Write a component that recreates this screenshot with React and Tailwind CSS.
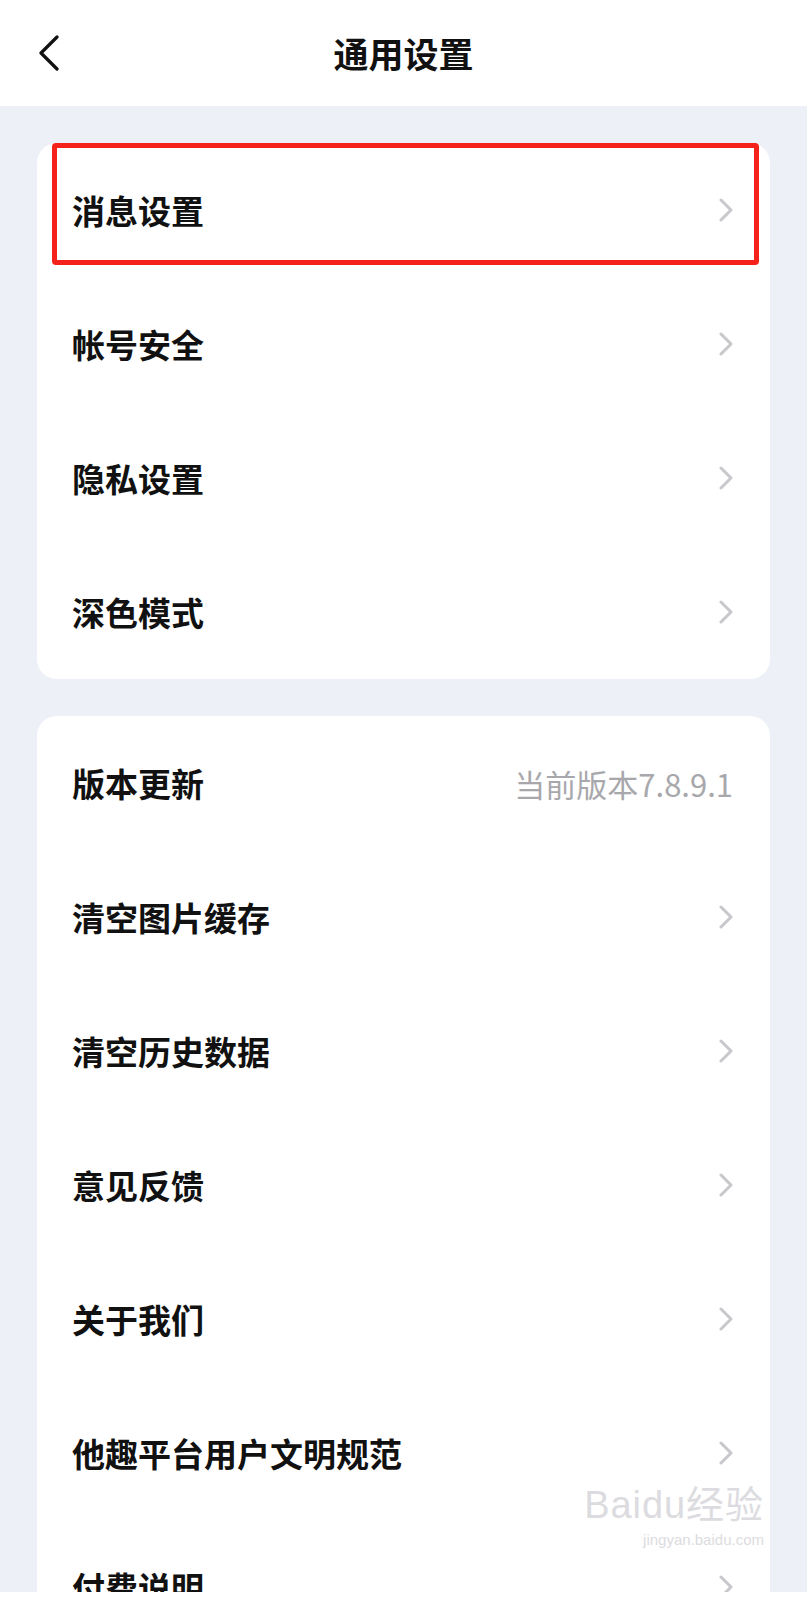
import React from 'react';

const font = { fontFamily: '"Noto Sans CJK SC", "Noto Sans", sans-serif' };

const Chevron = () => (
    <svg width="14" height="24" viewBox="0 0 14 24" fill="none" className="shrink-0">
        <polyline points="2,2 12,12 2,22" stroke="#c8c8cc" strokeWidth="3" strokeLinecap="round" strokeLinejoin="round" />
    </svg>
);

const Row = ({ label, right }) => (
    <div className="flex items-center justify-between h-[134px] pl-[35px] pr-[37px]">
        <span className="text-[33px] font-bold text-[#111111] leading-none">{label}</span>
        {right ? (
            <span className="text-[31px] text-[#a8a8ac] leading-none">{right}</span>
        ) : (
            <Chevron />
        )}
    </div>
);

const App = () => {
    const group1 = ['消息设置', '帐号安全', '隐私设置', '深色模式'];
    const group2 = ['清空图片缓存', '清空历史数据', '意见反馈', '关于我们', '他趣平台用户文明规范', '付费说明'];

    return (
        <div className="w-[807px] h-[1600px] flex flex-col overflow-hidden bg-[#eef0f8]" style={font}>
            {/* Header */}
            <div className="h-[106px] bg-white flex items-center relative shrink-0">
                <div className="pl-[38px] w-[120px]">
                    <svg width="22" height="36" viewBox="0 0 22 36" fill="none">
                        <polyline points="19,2 3,18 19,34" stroke="#111111" strokeWidth="3.2" strokeLinecap="round" strokeLinejoin="round" />
                    </svg>
                </div>
                <div className="flex-1 text-center text-[35px] font-bold text-[#111111] -ml-[120px]">通用设置</div>
            </div>

            {/* Content */}
            <div className="flex-1 overflow-hidden px-[37px] pt-[37px] flex flex-col gap-[37px]">
                <div className="bg-white rounded-[20px] relative shrink-0">
                    {group1.map((l) => <Row key={l} label={l} />)}
                    {/* red annotation box */}
                    <div className="absolute left-[15px] right-[11px] top-0 h-[122px] border-[5px] border-[#f5221b] rounded-[4px] pointer-events-none" />
                </div>

                <div className="bg-white rounded-t-[20px] relative shrink-0">
                    <Row label="版本更新" right="当前版本7.8.9.1" />
                    {group2.map((l) => <Row key={l} label={l} />)}
                    {/* watermark */}
                    <div className="absolute right-[6px] top-[770px] flex flex-col items-end text-[#dcdce0] leading-none pointer-events-none select-none" style={{ fontFamily: '"Liberation Sans", "Noto Sans CJK SC", sans-serif' }}>
                        <span className="text-[38px] tracking-wide">Baidu经验</span>
                        <span className="text-[15px] mt-[8px]">jingyan.baidu.com</span>
                    </div>
                </div>
            </div>

            <div className="h-[8px] bg-white shrink-0" />
        </div>
    );
};

export default App;
